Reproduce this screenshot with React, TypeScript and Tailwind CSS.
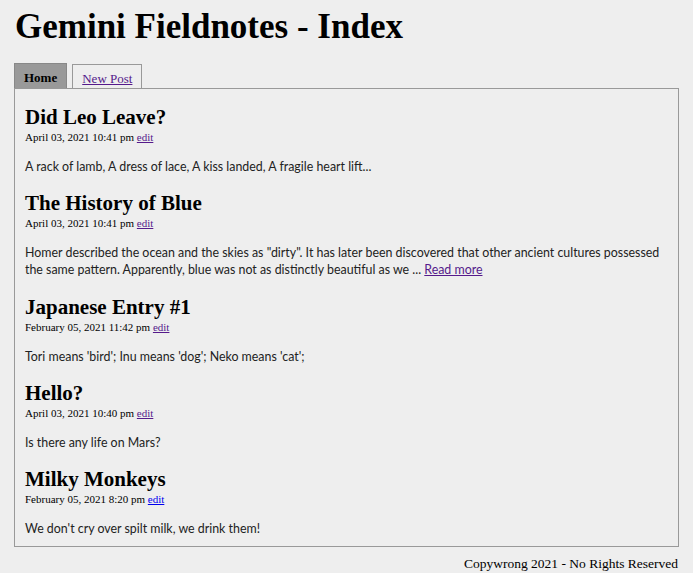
export default function App() {
  const posts = [
    { title: "Did Leo Leave?", date: "April 03, 2021 10:41 pm", body: "A rack of lamb, A dress of lace, A kiss landed, A fragile heart lift...", more: false, visited: true },
    { title: "The History of Blue", date: "April 03, 2021 10:41 pm", body: "Homer described the ocean and the skies as \"dirty\". It has later been discovered that other ancient cultures possessed the same pattern. Apparently, blue was not as distinctly beautiful as we ...", more: true, visited: true },
    { title: "Japanese Entry #1", date: "February 05, 2021 11:42 pm", body: "Tori means 'bird'; Inu means 'dog'; Neko means 'cat';", more: false, visited: true },
    { title: "Hello?", date: "April 03, 2021 10:40 pm", body: "Is there any life on Mars?", more: false, visited: true },
    { title: "Milky Monkeys", date: "February 05, 2021 8:20 pm", body: "We don't cry over spilt milk, we drink them!", more: false, visited: false },
  ];

  return (
    <div className="min-h-[573px] bg-[#eeeeee] px-[14px] pt-[7px] text-black">
      <h1 className="pl-[1px] font-['Liberation_Serif',serif] text-[35px] font-bold leading-[40px]">
        Gemini Fieldnotes - Index
      </h1>

      {/* tabs */}
      <div className="mt-[16px] flex items-end gap-[4px] font-['Liberation_Serif',serif] text-[13px]">
        <div className="h-[25px] border border-b-0 border-[#888] bg-[#999999] px-[9px] pt-[4px] font-bold">Home</div>
        <a href="#" className="ml-[1px] h-[24px] border border-b-0 border-[#999] bg-[#eeeeee] px-[9px] pt-[4px] text-[#551a8b] underline">
          New Post
        </a>
      </div>

      <div className="border border-[#999] px-[10px] pt-[16px] pb-[9px]">
        {posts.map((p, i) => (
          <div key={p.title} className={i === 1 ? "mb-[17px]" : "mb-[16px] last:mb-0"}>
            <h2 className="font-['Liberation_Serif',serif] text-[21px] font-bold leading-[25px]">{p.title}</h2>
            <div className="font-['Liberation_Serif',serif] text-[11px] leading-[14px]">
              {p.date}{" "}
              <a href="#" className={p.visited ? "text-[#551a8b] underline" : "text-[#0000ee] underline"}>edit</a>
            </div>
            <p className="mt-[14px] font-['Lato',sans-serif] text-[12.4px] leading-[17px] text-[#222]">
              {p.body}
              {p.more && (
                <>
                  {" "}
                  <a href="#" className="text-[#551a8b] underline">Read more</a>
                </>
              )}
            </p>
          </div>
        ))}
      </div>

      <div className="mt-[7px] pr-[1px] text-right font-['Liberation_Serif',serif] text-[13.5px]">
        Copywrong 2021 - No Rights Reserved
      </div>
    </div>
  );
}
